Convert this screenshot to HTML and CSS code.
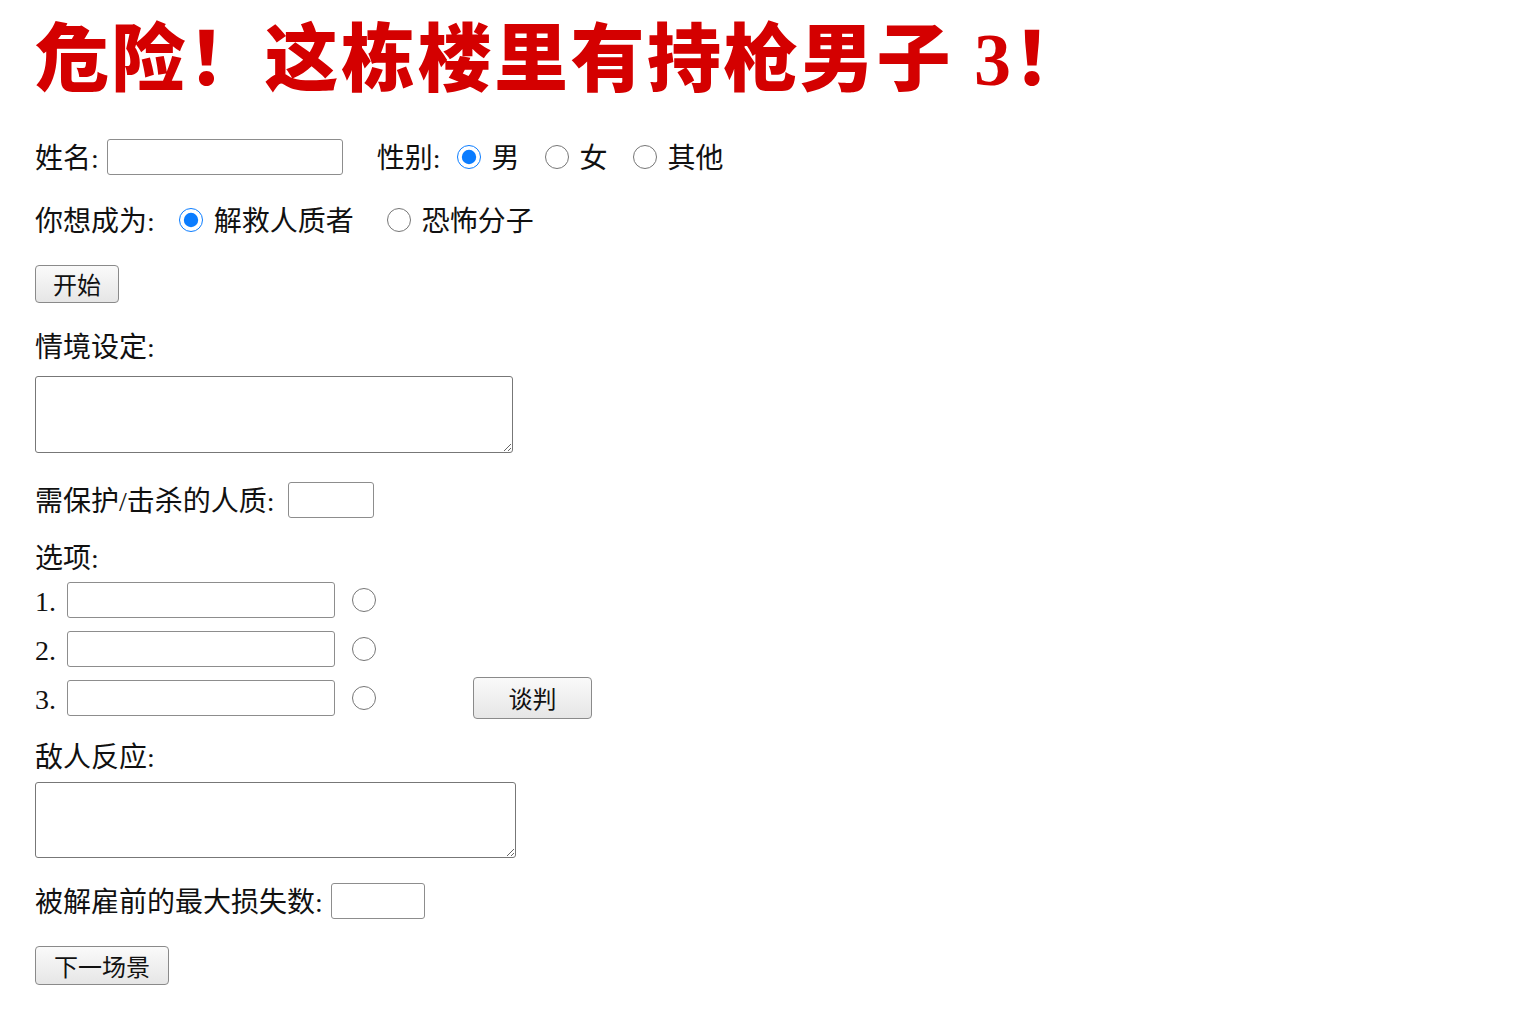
FILE: index.html
```html
<!DOCTYPE html>
<html lang="zh-CN">
<head>
	<meta charset="UTF-8">
	<title>危险！这栋楼里有持枪男子 3！</title>
	<link rel="stylesheet" href="styles.css">
</head>
<body>
	<h1 class="title">危险！这栋楼里有持枪男子 3！</h1>

	<div class="row row-name">
		<label class="label">姓名:</label>
		<input type="text" class="text name-input">
		<span class="label sex-label">性别:</span>
		<input type="radio" name="sex" class="radio" checked><span class="opt">男</span>
		<input type="radio" name="sex" class="radio"><span class="opt">女</span>
		<input type="radio" name="sex" class="radio"><span class="opt">其他</span>
	</div>

	<div class="row row-role">
		<span class="label">你想成为:</span>
		<input type="radio" name="role" class="radio" checked><span class="opt">解救人质者</span>
		<input type="radio" name="role" class="radio"><span class="opt">恐怖分子</span>
	</div>

	<button class="btn btn-start">开始</button>

	<div class="heading heading-scene">情境设定:</div>
	<textarea class="area area-scene"></textarea>

	<div class="row row-hostage">
		<span class="label">需保护/击杀的人质:</span>
		<input type="text" class="text small-input">
	</div>

	<div class="heading heading-options">选项:</div>
	<div class="row option option-1">
		<span class="num">1.</span>
		<input type="text" class="text option-input">
		<input type="radio" name="choice" class="radio">
	</div>
	<div class="row option option-2">
		<span class="num">2.</span>
		<input type="text" class="text option-input">
		<input type="radio" name="choice" class="radio">
	</div>
	<div class="row option option-3">
		<span class="num">3.</span>
		<input type="text" class="text option-input">
		<input type="radio" name="choice" class="radio">
		<button class="btn btn-talk">谈判</button>
	</div>

	<div class="heading heading-enemy">敌人反应:</div>
	<textarea class="area area-enemy"></textarea>

	<div class="row row-loss">
		<span class="label">被解雇前的最大损失数:</span>
		<input type="text" class="text loss-input">
	</div>

	<button class="btn btn-next">下一场景</button>
</body>
</html>
```

FILE: styles.css
```css
body {
	margin: 0;
	padding: 23px 35px 0;
	background: #fff;
	color: #111;
	font-family: "Liberation Serif", "Noto Sans CJK SC", serif;
	font-size: 28px;
}

.title {
	margin: 0;
	height: 74px;
	font-size: 74px;
	line-height: 74px;
	font-weight: 900;
	color: #d40000;
	letter-spacing: 2.5px;
	white-space: nowrap;
}

.row {
	display: flex;
	align-items: center;
	height: 36px;
	line-height: 36px;
}

.label,
.opt,
.num {
	padding-top: 4px;
}

.heading {
	box-sizing: border-box;
	height: 36px;
	padding-top: 2px;
	line-height: 36px;
}

.text {
	box-sizing: border-box;
	height: 36px;
	margin: 0;
	padding: 0 6px;
	border: 1px solid #8d8d8d;
	border-radius: 3px;
	background: #fff;
	font-size: 20px;
}

.radio {
	width: 24px;
	height: 24px;
	margin: 0;
	accent-color: #0a7cff;
}

.opt {
	margin-left: 11px;
	margin-right: 25px;
}

.btn {
	display: block;
	box-sizing: border-box;
	margin: 0;
	padding: 0;
	border: 1px solid #8a8a8a;
	border-radius: 4px;
	background: linear-gradient(#fafafa, #e6e6e6);
	color: #111;
	font-family: "Noto Sans CJK SC", "Liberation Sans", sans-serif;
	font-size: 24px;
	line-height: 1;
}

.area {
	display: block;
	box-sizing: border-box;
	margin: 0;
	border: 1px solid #777;
	border-radius: 3px;
	background: #fff;
	resize: both;
}

/* row 1 */
.row-name {
	margin-top: 42px;
}

.name-input {
	width: 236px;
	margin-left: 8px;
}

.sex-label {
	margin-left: 34px;
	margin-right: 16px;
}

/* row 2 */
.row-role {
	margin-top: 27px;
}

.row-role .label {
	margin-right: 24px;
}

.row-role .opt {
	margin-right: 33px;
}

.btn-start {
	margin-top: 27px;
	width: 84px;
	height: 38px;
}

.heading-scene {
	margin-top: 25px;
}

.area-scene {
	margin-top: 12px;
	width: 478px;
	height: 77px;
}

.row-hostage {
	margin-top: 29px;
}

.small-input {
	width: 86px;
	margin-left: 13px;
}

.heading-options {
	margin-top: 21px;
}

.num {
	width: 32px;
}

.option-input {
	width: 268px;
}

.option .radio {
	margin-left: 17px;
}

.option-1 {
	margin-top: 7px;
}

.option-2 {
	margin-top: 13px;
}

.option-3 {
	margin-top: 10px;
	height: 42px;
}

.btn-talk {
	margin-left: 97px;
	width: 119px;
	height: 42px;
}

.heading-enemy {
	margin-top: 19px;
}

.area-enemy {
	margin-top: 8px;
	width: 481px;
	height: 76px;
}

.row-loss {
	margin-top: 25px;
}

.loss-input {
	width: 94px;
	margin-left: 8px;
}

.btn-next {
	margin-top: 27px;
	width: 134px;
	height: 39px;
}
```
